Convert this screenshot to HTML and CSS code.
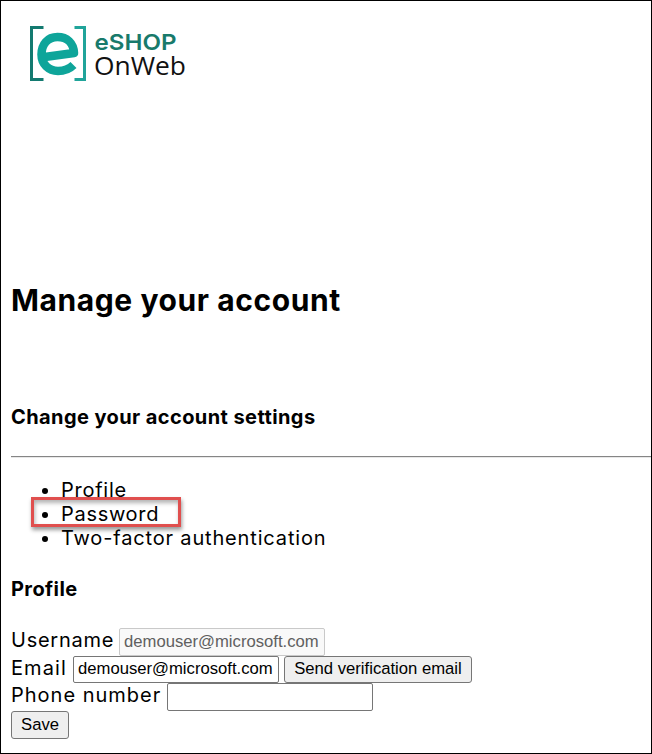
FILE: index.html
```html
<!DOCTYPE html>
<html lang="en">
<head>
<meta charset="utf-8">
<title>Manage your account</title>
<link rel="stylesheet" href="styles.css">
</head>
<body>
<header class="header">
  <svg class="logo" width="170" height="64" viewBox="25 21 170 64" role="img" aria-label="eSHOP OnWeb">
    <path class="bracket-left" d="M43.5 27.5H31.5V79.5H43.5"/>
    <path class="bracket-right" d="M74.5 27.5H84.5V79.5H74.5"/>
    <path class="mark" d="M41 57.500L74 53C73.500 43 67 37 57.500 37C47.500 37 41.500 44.500 41.500 54.500C41.500 64 48.500 71 58 71C65 71 69.500 69 73.500 65"/>
    <text class="brand" x="94.500" y="50" textLength="82" lengthAdjust="spacingAndGlyphs">eSHOP</text>
    <text class="product" x="94" y="75" textLength="92" lengthAdjust="spacingAndGlyphs">OnWeb</text>
  </svg>
</header>
<main class="content">
  <h2 class="title">Manage your account</h2>
  <h4 class="subtitle">Change your account settings</h4>
  <hr class="rule">
  <ul class="nav">
    <li><span class="nav-profile">Profile</span></li>
    <li class="current"><span class="nav-password">Password</span></li>
    <li><span class="nav-factor">Two-factor authentication</span></li>
  </ul>
  <h4 class="section">Profile</h4>
  <form class="form">
    <div class="row"><label class="l-user" for="user">Username</label><input id="user" value="demouser@microsoft.com" disabled></div>
    <div class="row"><label class="l-email" for="email">Email</label><input id="email" value="demouser@microsoft.com"><button class="verify" type="button">Send verification email</button></div>
    <div class="row"><label class="l-phone" for="phone">Phone number</label><input id="phone"></div>
    <button class="save" type="button">Save</button>
  </form>
</main>
</body>
</html>
```
FILE: styles.css
```css
*, *::after { box-sizing: border-box; }
body {
  margin: 0;
  height: 754px;
  overflow: hidden;
  border: 1px solid #000;
  background: #fff;
  color: #000;
  font: 20px/24px Inter, "Liberation Sans", sans-serif;
}
.header { height: 260px; padding: 20px 0 0 24px; }
.logo { display: block; }
.bracket-left, .bracket-right, .mark { fill: none; stroke-width: 3; }
.bracket-left { stroke: #137a70; }
.bracket-right { stroke: #20a49a; }
.mark { stroke: #0ea59a; stroke-width: 8.5; stroke-linejoin: round; }
.brand { font: 600 22px Inter, sans-serif; fill: #187a6b; }
.product { font: 400 25px "Open Sans", sans-serif; fill: #111; }
.content { padding-left: 10px; }
.title { margin: 0; padding-top: 21px; height: 144px; font-size: 30px; line-height: 36px; font-weight: 700; letter-spacing: .58px; white-space: nowrap; }
.subtitle { margin: 0; height: 51px; font-size: 20px; font-weight: 700; letter-spacing: .41px; }
.rule { margin: 0; height: 2px; border: 0; border-top: 1px solid #858585; border-bottom: 1px solid #e8e8e8; }
.nav { margin: 0; padding: 20px 0 0 50px; height: 119px; }
.nav li { position: relative; height: 24px; }
.nav-profile { letter-spacing: .75px; }
.nav-password { letter-spacing: .7px; }
.nav-factor { letter-spacing: .84px; }
.current::after {
  content: "";
  position: absolute;
  left: -30px;
  top: -5px;
  width: 150px;
  height: 30px;
  border: 3px solid #e04f4e;
  box-shadow: 1px 3px 4px rgba(0, 0, 0, .4), inset 1px 3px 4px rgba(0, 0, 0, .3);
}
.section { margin: 0; height: 51px; font-size: 20px; font-weight: 700; letter-spacing: .4px; }
.row { display: flex; height: 27.670px; }
label { height: 24px; white-space: nowrap; }
.l-user { width: 108px; letter-spacing: .75px; }
.l-email { width: 62px; letter-spacing: 1.1px; }
.l-phone { width: 156px; letter-spacing: 1px; }
input {
  width: 206px;
  height: 27.500px;
  padding: 1px 4px;
  border: 1px solid #767676;
  border-radius: 2px;
  background: #fff;
  color: #000;
  font: 16.670px "Liberation Sans", Arial, sans-serif;
}
input:disabled { border-color: #c9c9c9; background: #f9f9f9; color: #606060; }
button {
  height: 28px;
  padding: 0;
  border: 1px solid #767676;
  border-radius: 3px;
  background: #efefef;
  color: #000;
  font: 16.670px "Liberation Sans", Arial, sans-serif;
}
.verify { width: 188px; height: 27px; margin-left: 5px; }
.save { display: block; width: 58px; }
```
